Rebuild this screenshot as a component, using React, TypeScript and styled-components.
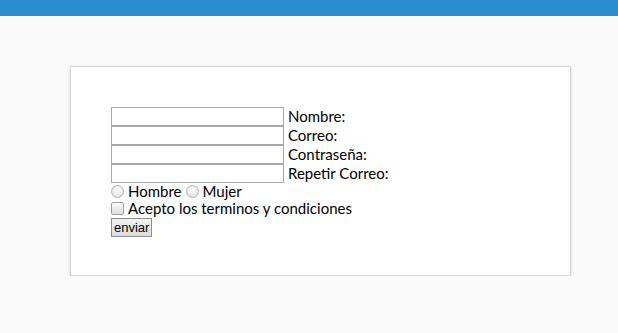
import React from "react";
import styled, { createGlobalStyle } from "styled-components";

const GlobalStyle = createGlobalStyle`
  html, body {
    margin: 0;
    padding: 0;
    background: #fafafa;
  }
`;

const fields = ["Nombre:", "Correo:", "Contraseña:", "Repetir Correo:"];

const App: React.FC = () => {
  return (
    <>
      <GlobalStyle />
      <TopBar />
      <Card>
        <Form onSubmit={(e) => e.preventDefault()}>
          {fields.map((label) => (
            <FieldRow key={label}>
              <TextInput type={label === "Contraseña:" ? "password" : "text"} />
              <Label>{label}</Label>
            </FieldRow>
          ))}
          <OptionRow>
            <Radio type="radio" name="sexo" />
            <Label>Hombre</Label>
            <Radio type="radio" name="sexo" />
            <Label>Mujer</Label>
          </OptionRow>
          <OptionRow>
            <Check type="checkbox" />
            <Label>Acepto los terminos y condiciones</Label>
          </OptionRow>
          <SendButton type="submit">enviar</SendButton>
        </Form>
      </Card>
    </>
  );
};

const TopBar = styled.div`
  height: 16px;
  background-color: #2b8cd0;
`;

const Card = styled.div`
  margin: 50px 0 0 70px;
  width: 501px;
  height: 210px;
  box-sizing: border-box;
  background: #fff;
  border: 1px solid #d6d6d6;
  box-shadow: 0 1px 3px rgba(0, 0, 0, 0.15);
  padding: 40px 40px;
`;

const Form = styled.form`
  display: flex;
  flex-direction: column;
  align-items: flex-start;
  font-family: Lato, "Open Sans", sans-serif;
  font-size: 15px;
  color: #000;
`;

const FieldRow = styled.div`
  display: flex;
  align-items: center;
  height: 19px;
`;

const TextInput = styled.input`
  box-sizing: border-box;
  width: 173px;
  height: 19px;
  margin: 0 4px 0 0;
  padding: 1px 2px;
  border: 1px solid #a9a9a9;
  background: #fff;
  outline: none;
`;

const Label = styled.span`
  line-height: 19px;
`;

const OptionRow = styled.div`
  display: flex;
  align-items: center;
  height: 17px;
  gap: 4px;
`;

const Radio = styled.input`
  appearance: none;
  width: 13px;
  height: 13px;
  margin: 0 0 0 0;
  border-radius: 50%;
  border: 1px solid #b4b4b4;
  background: radial-gradient(circle at 50% 35%, #fdfdfd, #dcdcdc);
  &:nth-child(3) {
    margin-left: 0;
  }
`;

const Check = styled.input`
  appearance: none;
  width: 13px;
  height: 13px;
  margin: 0;
  border-radius: 2px;
  border: 1px solid #a0a0a0;
  background: linear-gradient(#fafafa, #dedede);
`;

const SendButton = styled.button`
  margin-top: 1px;
  height: 19px;
  padding: 0 2px;
  font-family: "Liberation Sans", Arial, sans-serif;
  font-size: 13px;
  color: #000;
  background: linear-gradient(#f2f2f2, #dcdcdc);
  border: 1px solid #8f8f8f;
  border-radius: 0;
`;

export default App;
